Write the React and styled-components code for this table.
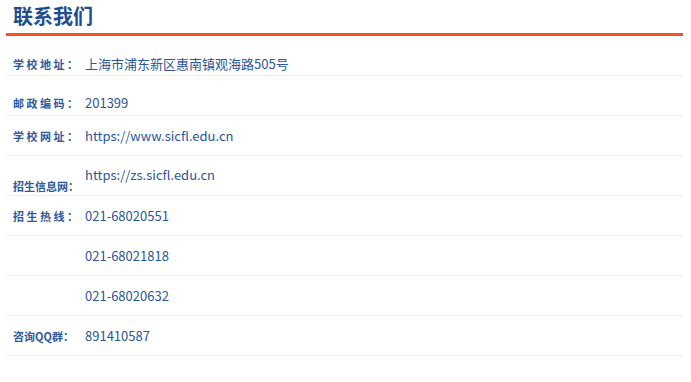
import React from "react";
import styled, { createGlobalStyle } from "styled-components";

const GlobalStyle = createGlobalStyle`
  body {
    margin: 0;
    background: #ffffff;
    font-family: "Noto Sans CJK SC", "Noto Sans", sans-serif;
  }
`;

const contacts = [
  { label: "学校地址：", value: "上海市浦东新区惠南镇观海路505号", top: 18, spaced: true },
  { label: "邮政编码：", value: "201399", top: 17, spaced: true },
  { label: "学校网址：", value: "https://www.sicfl.edu.cn", spaced: true },
  { label: "招生信息网：", value: "https://zs.sicfl.edu.cn", top: 9, labelTop: 20 },
  { label: "招生热线：", value: "021-68020551", spaced: true },
  { label: "", value: "021-68021818" },
  { label: "", value: "021-68020632" },
  { label: "咨询QQ群：", value: "891410587" },
];

const ContactUs = () => {
  return (
    <Wrapper>
      <Title>联系我们</Title>
      <List>
        {contacts.map((item, i) => (
          <Row key={i}>
            <Label $spaced={item.spaced} $top={item.labelTop ?? item.top}>
              {item.label}
            </Label>
            <Value $top={item.top}>{item.value}</Value>
          </Row>
        ))}
      </List>
    </Wrapper>
  );
};

const Wrapper = styled.div`
  padding: 0 8px 0 6px;
`;

const Title = styled.h2`
  margin: 0;
  height: 33px;
  box-sizing: border-box;
  padding: 4px 0 0 7px;
  font-size: 20px;
  line-height: 24px;
  font-weight: 700;
  color: #1f4d8f;
  border-bottom: 3px solid #ff4f24;
  height: 36px;
`;

const List = styled.div`
  display: flex;
  flex-direction: column;
`;

const Row = styled.div`
  display: flex;
  height: 40px;
  box-sizing: border-box;
  border-bottom: 1px solid #eeeeee;
`;

const Label = styled.div`
  width: 72px;
  flex-shrink: 0;
  padding-left: 7px;
  box-sizing: content-box;
  font-size: 11px;
  font-weight: 700;
  line-height: 20px;
  letter-spacing: ${(p) => (p.$spaced ? "2.5px" : "0")};
  color: #2d5a9b;
  white-space: nowrap;
  align-self: ${(p) => (p.$top !== undefined ? "flex-start" : "center")};
  padding-top: ${(p) => (p.$top !== undefined ? `${p.$top}px` : "0")};
`;

const Value = styled.div`
  font-size: 13px;
  line-height: 20px;
  color: #2a569b;
  align-self: ${(p) => (p.$top !== undefined ? "flex-start" : "center")};
  padding-top: ${(p) => (p.$top !== undefined ? `${p.$top}px` : "0")};
`;

export default function App() {
  return (
    <>
      <GlobalStyle />
      <ContactUs />
    </>
  );
}
